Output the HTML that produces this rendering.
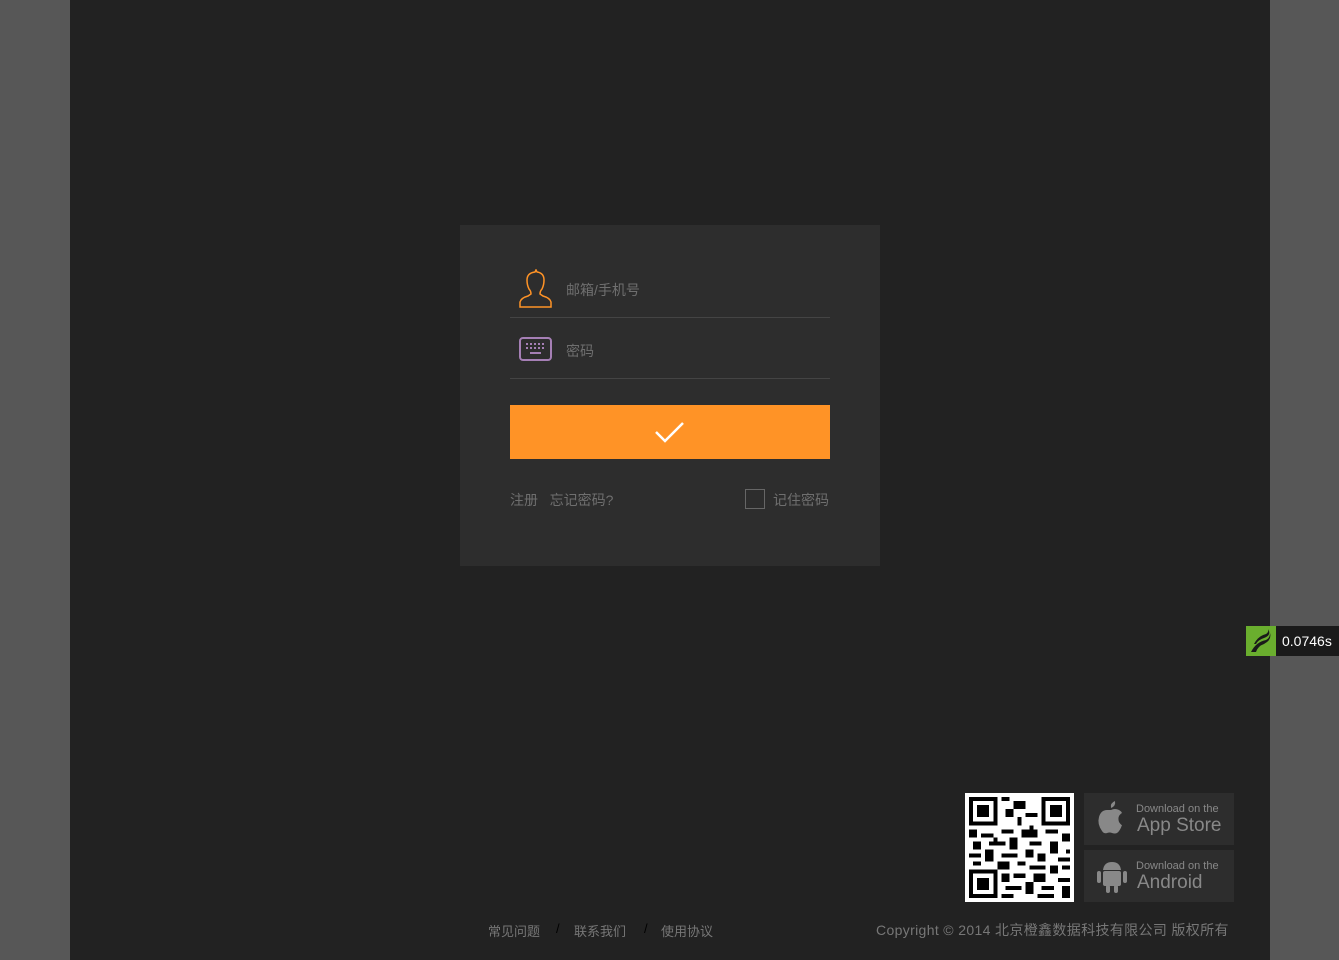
<!DOCTYPE html>
<html><head><meta charset="utf-8"><style>
*{margin:0;padding:0;box-sizing:border-box}
body{width:1339px;height:960px;background:#575757;font-family:"Liberation Sans","Noto Sans CJK SC",sans-serif;position:relative;overflow:hidden}
.main{position:absolute;left:70px;top:0;width:1200px;height:960px;background:#222}
.box{position:absolute;left:460px;top:225px;width:420px;height:341px;background:#2d2d2d}
.row{position:absolute;left:50px;width:320px;border-bottom:1px solid #444;color:#6f6f6f;font-size:14px}
.btn{position:absolute;left:50px;top:180px;width:320px;height:54px;background:#ff9326}
.t{position:absolute;font-size:14px;color:#6f6f6f}
.foot{position:absolute;top:921px;font-size:13px;color:#777}
.store{position:absolute;left:1084px;width:150px;height:52px;background:#2d2d2d;color:#888}
.store .s{position:absolute;left:52px;top:10px;font-size:11px}
.store .b{position:absolute;left:53px;top:22px;font-size:19px}
</style></head><body>
<div class="main"></div>
<div class="box">
 <div class="row" style="top:40px;height:53px">
  <svg style="position:absolute;left:8px;top:4px" width="36" height="40" viewBox="0 0 36 40"><path d="M2 38 L2 33 Q3 29 10 27 L13 25 Q13 22 11 20 Q9 16 9 11 Q9 4 17 3 L18 1 L19 3 Q26 4 26 11 Q26 16 24 20 Q22 22 22 25 L25 27 Q32 29 33 33 L33 38 Z" fill="none" stroke="#ff9326" stroke-width="1.5"/></svg>
  <span style="position:absolute;left:56px;top:15px">邮箱/手机号</span>
 </div>
 <div class="row" style="top:93px;height:61px">
  <svg style="position:absolute;left:9px;top:19px" width="34" height="26" viewBox="0 0 34 26"><rect x="1" y="1" width="31" height="22" rx="3" fill="none" stroke="#a57fb5" stroke-width="2"/><g fill="#a57fb5"><rect x="7" y="6" width="2" height="2"/><rect x="11" y="6" width="2" height="2"/><rect x="15" y="6" width="2" height="2"/><rect x="19" y="6" width="2" height="2"/><rect x="23" y="6" width="2" height="2"/><rect x="7" y="10" width="2" height="2"/><rect x="11" y="10" width="2" height="2"/><rect x="15" y="10" width="2" height="2"/><rect x="19" y="10" width="2" height="2"/><rect x="23" y="10" width="2" height="2"/><rect x="11" y="15" width="11" height="2"/></g></svg>
  <span style="position:absolute;left:56px;top:23px">密码</span>
 </div>
 <div class="btn"><svg style="position:absolute;left:144px;top:15px" width="32" height="24" viewBox="0 0 32 24"><path d="M2 12 L11 21 L29 3" fill="none" stroke="#fff" stroke-width="2.5"/></svg></div>
 <div class="t" style="left:50px;top:265px">注册 &nbsp;&nbsp;忘记密码?</div>
 <div style="position:absolute;left:285px;top:264px;width:20px;height:20px;border:1px solid #666"></div>
 <div class="t" style="left:313px;top:265px">记住密码</div>
</div>
<div style="position:absolute;left:1246px;top:626px;width:93px;height:30px;background:#1a1a1a">
 <div style="position:absolute;left:0;top:0;width:30px;height:30px;background:#6aae2e"></div>
 <svg style="position:absolute;left:2px;top:2px" width="26" height="26" viewBox="0 0 26 26"><path d="M3 24 Q8 14 18 12 Q22 10 22 5 Q24 12 16 16 Q10 18 8 24Z M6 16 Q10 8 18 6 Q21 4 20 1 Q24 7 16 10 Q10 12 8 16Z" fill="#1a1a1a"/></svg>
 <span style="position:absolute;left:36px;top:7px;color:#fff;font-size:14px">0.0746s</span>
</div>
<svg style="position:absolute;left:965px;top:793px" width="109" height="109" viewBox="-1 -1 27 27" shape-rendering="crispEdges">
<rect x="-1" y="-1" width="27" height="27" fill="#fff"/>
<g fill="#000">
<path d="M0 0h7v7h-7zM1 1v5h5v-5zM2 2h3v3h-3z" fill-rule="evenodd"/>
<path d="M18 0h7v7h-7zM19 1v5h5v-5zM20 2h3v3h-3z" fill-rule="evenodd"/>
<path d="M0 18h7v7h-7zM1 19v5h5v-5zM2 20h3v3h-3z" fill-rule="evenodd"/>
<path d="M8 0h2v1h-2zM11 1h3v2h-3zM9 3h2v2h-2zM14 4h3v1h-3zM12 5h1v2h-1zM8 8h3v1h-3zM0 8h2v2h-2zM3 9h3v1h-3zM13 8h4v2h-4zM19 8h3v1h-3zM23 9h2v2h-2zM1 11h2v2h-2zM5 11h4v1h-4zM10 10h2v3h-2zM15 11h3v1h-3zM20 11h2v3h-2zM0 14h3v1h-3zM4 13h2v3h-2zM8 14h4v1h-4zM14 13h2v2h-2zM17 14h2v2h-2zM22 15h3v1h-3zM1 16h2v1h-2zM7 16h3v2h-3zM12 16h2v1h-2zM15 17h4v1h-4zM20 17h2v2h-2zM23 17h2v1h-2zM8 19h2v2h-2zM11 19h3v1h-3zM16 19h3v2h-3zM22 20h3v1h-3zM9 22h4v1h-4zM14 21h2v3h-2zM18 22h3v1h-3zM23 22h2v3h-2zM8 24h3v1h-3zM17 24h4v1h-4zM15 7h1v1h-1zM6 10h1v1h-1zM24 13h1v1h-1z"/>
</g></svg>
<div class="store" style="top:793px">
 <svg style="position:absolute;left:12px;top:6px" width="30" height="36" viewBox="0 0 30 36"><path d="M19 2 Q20 7 15 9 Q14 4 19 2Z M15 11 Q19 9 23 11 Q25 12 26 14 Q21 17 23 23 Q25 26 26 26 Q24 32 21 34 Q19 35 16 34 Q14 33 11 34 Q8 35 6 32 Q1 25 3 18 Q5 11 11 11 Q13 11 15 11Z" fill="#888"/></svg>
 <span class="s">Download on the</span><span class="b">App Store</span>
</div>
<div class="store" style="top:850px">
 <svg style="position:absolute;left:12px;top:8px" width="32" height="36" viewBox="0 0 32 36"><g fill="#888"><path d="M7 12 Q8 4 16 4 Q24 4 25 12Z"/><rect x="7" y="13" width="18" height="15" rx="2"/><rect x="1" y="13" width="4" height="12" rx="2"/><rect x="27" y="13" width="4" height="12" rx="2"/><rect x="10" y="27" width="4" height="8" rx="2"/><rect x="18" y="27" width="4" height="8" rx="2"/></g></svg>
 <span class="s">Download on the</span><span class="b">Android</span>
</div>
<div class="foot" style="left:488px">常见问题</div>
<div class="foot" style="left:556px;color:#000">/</div>
<div class="foot" style="left:574px">联系我们</div>
<div class="foot" style="left:644px;color:#000">/</div>
<div class="foot" style="left:661px">使用协议</div>
<div class="foot" style="left:876px;font-size:14px;top:920px;letter-spacing:0.35px">Copyright © 2014 北京橙鑫数据科技有限公司 版权所有</div>
</body></html>
